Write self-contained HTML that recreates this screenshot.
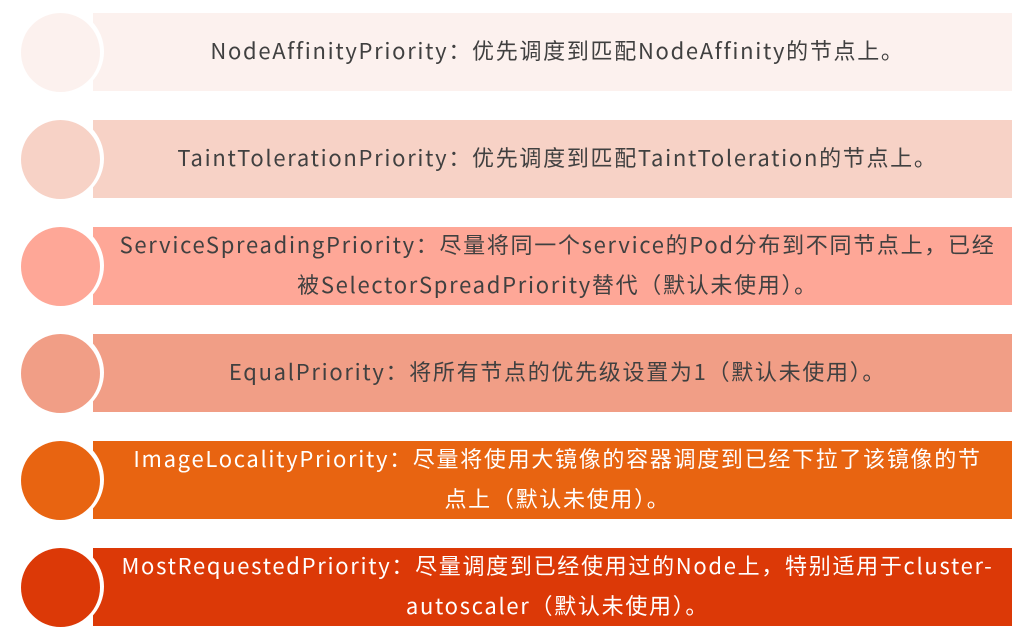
<!DOCTYPE html>
<html><head><meta charset="utf-8"><style>
body{margin:0;width:1022px;height:638px;background:#fff;position:relative;overflow:hidden;font-family:"Noto Sans CJK SC","Liberation Sans",sans-serif;}
.band{position:absolute;left:93px;width:919px;height:78px;display:flex;align-items:center;justify-content:center;text-align:center;font-size:22px;letter-spacing:1.7px;line-height:40px;color:#404040;padding-left:10px;padding-bottom:4px;box-sizing:border-box;white-space:nowrap;}
.ring{position:absolute;left:17px;width:87px;height:87px;border-radius:50%;background:#fff;}
.c{position:absolute;left:21px;width:79px;height:79px;border-radius:50%;}
.w{color:#fff}
</style></head><body>
<div class="band" style="top:13px;background:#fcf1ee">NodeAffinityPriority：优先调度到匹配NodeAffinity的节点上。</div>
<div class="ring" style="top:8px"></div><div class="c" style="top:13px;background:#fcf1ee"></div>

<div class="band" style="top:120px;background:#f7d2c6">TaintTolerationPriority：优先调度到匹配TaintToleration的节点上。</div>
<div class="ring" style="top:115px"></div><div class="c" style="top:120px;background:#f7d2c6"></div>

<div class="band" style="top:227px;background:#fea797">ServiceSpreadingPriority：尽量将同一个service的Pod分布到不同节点上，已经<br>被SelectorSpreadPriority替代（默认未使用）。</div>
<div class="ring" style="top:222px"></div><div class="c" style="top:227px;background:#fea797"></div>

<div class="band" style="top:334px;background:#f19e86">EqualPriority：将所有节点的优先级设置为1（默认未使用）。</div>
<div class="ring" style="top:329px"></div><div class="c" style="top:334px;background:#f19e86"></div>

<div class="band w" style="top:441px;background:#e86411">ImageLocalityPriority：尽量将使用大镜像的容器调度到已经下拉了该镜像的节<br>点上（默认未使用）。</div>
<div class="ring" style="top:436px"></div><div class="c" style="top:441px;background:#e86411"></div>

<div class="band w" style="top:548px;background:#dc3907">MostRequestedPriority：尽量调度到已经使用过的Node上，特别适用于cluster-<br>autoscaler（默认未使用）。</div>
<div class="ring" style="top:543px"></div><div class="c" style="top:548px;background:#dc3907"></div>
</body></html>
